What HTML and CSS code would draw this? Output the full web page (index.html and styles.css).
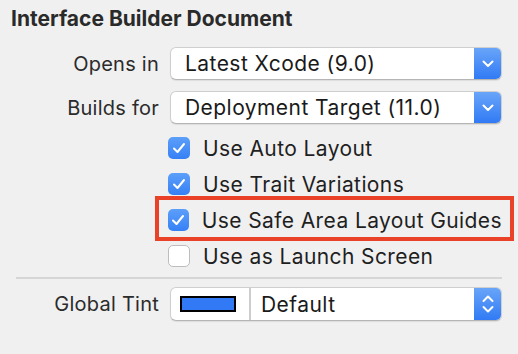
FILE: index.html
```html
<!DOCTYPE html>
<html>
<head>
<meta charset="utf-8">
<link rel="stylesheet" href="styles.css">
</head>
<body>
<div class="panel">
  <h1 class="title">Interface Builder Document</h1>

  <div class="field first">
    <span class="label">Opens in</span>
    <div class="popup">
      <span class="popup-text">Latest Xcode (9.0)</span>
      <span class="popup-arrow">
        <svg width="12" height="8" viewBox="0 0 12 8"><path d="M1.5 1.5 L6 6 L10.5 1.5" fill="none" stroke="#fff" stroke-width="2" stroke-linecap="round" stroke-linejoin="round"/></svg>
      </span>
    </div>
  </div>

  <div class="field second">
    <span class="label">Builds for</span>
    <div class="popup">
      <span class="popup-text">Deployment Target (11.0)</span>
      <span class="popup-arrow">
        <svg width="12" height="8" viewBox="0 0 12 8"><path d="M1.5 1.5 L6 6 L10.5 1.5" fill="none" stroke="#fff" stroke-width="2" stroke-linecap="round" stroke-linejoin="round"/></svg>
      </span>
    </div>
  </div>

  <div class="checks">
    <div class="check-row">
      <span class="box on"><svg width="14" height="12" viewBox="0 0 14 12"><path d="M2 6.5 L5.5 10 L12 2" fill="none" stroke="#fff" stroke-width="2" stroke-linecap="round" stroke-linejoin="round"/></svg></span>
      <span class="check-text">Use Auto Layout</span>
    </div>
    <div class="check-row">
      <span class="box on"><svg width="14" height="12" viewBox="0 0 14 12"><path d="M2 6.5 L5.5 10 L12 2" fill="none" stroke="#fff" stroke-width="2" stroke-linecap="round" stroke-linejoin="round"/></svg></span>
      <span class="check-text">Use Trait Variations</span>
    </div>
    <div class="check-row highlight">
      <span class="box on"><svg width="14" height="12" viewBox="0 0 14 12"><path d="M2 6.5 L5.5 10 L12 2" fill="none" stroke="#fff" stroke-width="2" stroke-linecap="round" stroke-linejoin="round"/></svg></span>
      <span class="check-text">Use Safe Area Layout Guides</span>
    </div>
    <div class="check-row">
      <span class="box off"></span>
      <span class="check-text">Use as Launch Screen</span>
    </div>
  </div>

  <div class="separator"></div>

  <div class="field tint">
    <span class="label">Global Tint</span>
    <div class="popup">
      <span class="swatch-cell"><span class="swatch"></span></span>
      <span class="popup-text tint-text">Default</span>
      <span class="popup-arrow">
        <svg width="12" height="20" viewBox="0 0 12 20"><path d="M1.5 7 L6 2.5 L10.5 7 M1.5 13 L6 17.5 L10.5 13" fill="none" stroke="#fff" stroke-width="2" stroke-linecap="round" stroke-linejoin="round"/></svg>
      </span>
    </div>
  </div>
</div>
</body>
</html>
```

FILE: styles.css
```css
html, body {
  margin: 0;
  padding: 0;
  background: #f0f0f0;
}

body {
  font-family: Inter, "Noto Sans", sans-serif;
  color: #262626;
  width: 518px;
  height: 354px;
  overflow: hidden;
}

.panel {
  padding: 7px 16px 0 16px;
}

.title {
  margin: 0 0 0 -5px;
  font-size: 21px;
  line-height: 24px;
  font-weight: 700;
  color: #2a2a2a;
  letter-spacing: 0;
}

.field {
  display: grid;
  grid-template-columns: 143px 1fr;
  column-gap: 11px;
  align-items: center;
}

.field.first { margin-top: 16px; }
.field.second { margin-top: 11px; }

.label {
  text-align: right;
  font-size: 20px;
  letter-spacing: 0.25px;
  color: #2b2b2b;
}

.popup {
  height: 33px;
  box-sizing: border-box;
  display: flex;
  align-items: center;
  background: #fff;
  border-radius: 6px;
  border: 1px solid #cfcfcf;
  border-bottom-color: #b5b5b5;
  box-shadow: 0 1px 1px rgba(0,0,0,0.08);
  overflow: hidden;
}

.popup-text {
  flex: 1;
  padding-left: 14px;
  font-size: 21px;
  letter-spacing: 0.45px;
  color: #1a1a1a;
  white-space: nowrap;
}

.popup-arrow {
  align-self: stretch;
  width: 28px;
  margin: -1px -1px -1px 0;
  background: linear-gradient(#6aa6f9, #2f79f4);
  display: flex;
  align-items: center;
  justify-content: center;
}

.checks {
  margin: 6px 0 0 152px;
}

.check-row {
  height: 36px;
  display: flex;
  align-items: center;
  gap: 13px;
  position: relative;
}

.box {
  width: 22px;
  height: 22px;
  box-sizing: border-box;
  border-radius: 5px;
  display: flex;
  align-items: center;
  justify-content: center;
}

.box.on {
  background: linear-gradient(#5c9ff9, #3680f6);
}

.box.off {
  background: #fff;
  border: 1px solid #bdbdbd;
}

.check-text {
  font-size: 21px;
  letter-spacing: 0.4px;
  color: #1f1f1f;
  white-space: nowrap;
}

.highlight::after {
  content: "";
  position: absolute;
  left: -13px;
  right: -12px;
  top: -6px;
  bottom: -3px;
  border: 4px solid #ea4229;
  pointer-events: none;
}

.separator {
  height: 2px;
  background: #d6d6d6;
  margin-top: 3px;
}

.field.tint { margin-top: 8px; }

.tint .popup { height: 34px; }

.swatch-cell {
  width: 80px;
  align-self: stretch;
  display: flex;
  align-items: center;
  justify-content: center;
  border-right: 2px solid #cdcdcd;
  box-sizing: border-box;
}

.swatch {
  width: 56px;
  height: 16px;
  box-sizing: border-box;
  background: #3279f5;
  border: 2px solid #000;
  margin-left: -4px;
}

.tint-text {
  padding-left: 10px;
}
```
